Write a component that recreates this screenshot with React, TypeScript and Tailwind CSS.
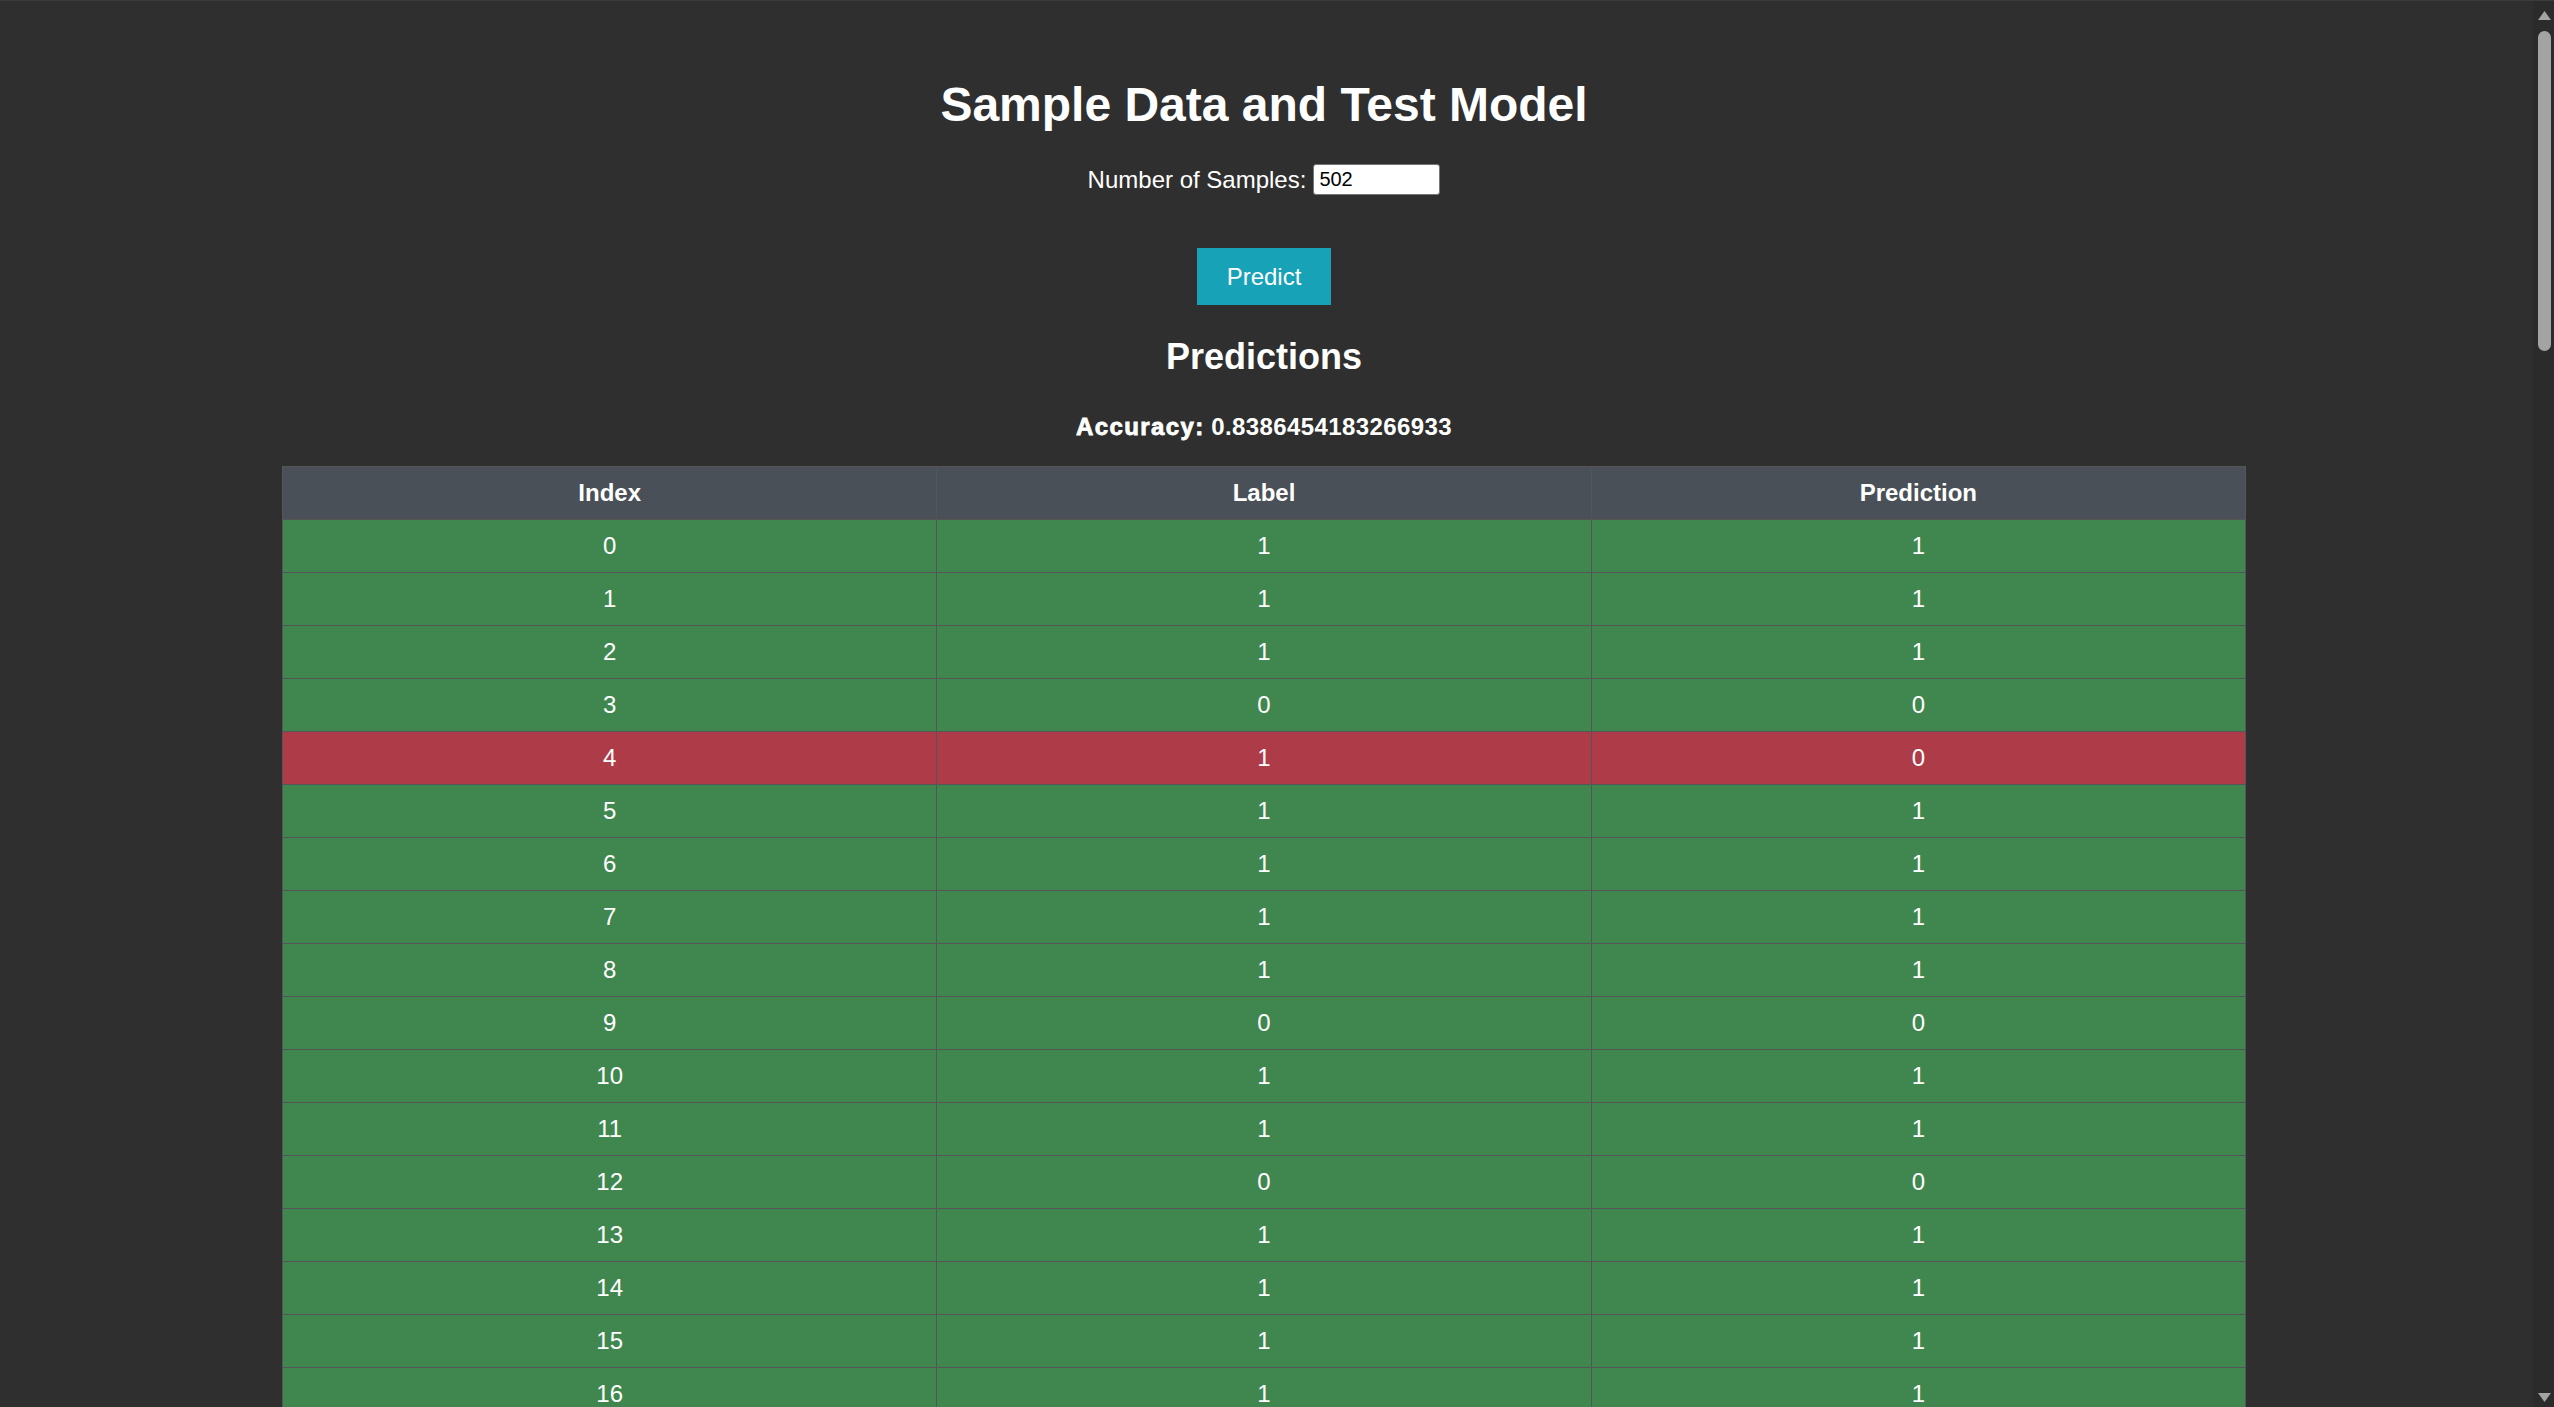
import React from 'react';

// [label, prediction] for the rows shown in the first screen of the table
const rows: [number, number][] = [
  [1, 1], [1, 1], [1, 1], [0, 0], [1, 0], [1, 1], [1, 1], [1, 1], [1, 1],
  [0, 0], [1, 1], [1, 1], [0, 0], [1, 1], [1, 1], [1, 1], [1, 1], [1, 1],
  [0, 0], [1, 1],
];

const Scrollbar: React.FC = () => (
  <div className="w-[21px] shrink-0 bg-[#2b2b2b] flex flex-col items-center">
    <svg width="15" height="11" viewBox="0 0 15 11" className="mt-[9px] ml-[2px]">
      <polygon points="7.5,1 14,10 1,10" fill="#a3a3a3" />
    </svg>
    <div className="mt-[10px] ml-[2px] w-[13px] h-[320px] rounded-full bg-[#a3a3a3]" />
    <div className="flex-1" />
    <svg width="15" height="11" viewBox="0 0 15 11" className="mb-[4px] ml-[2px]">
      <polygon points="1,1 14,1 7.5,10" fill="#a3a3a3" />
    </svg>
  </div>
);

const App: React.FC = () => {
  return (
    <div className="h-screen overflow-hidden flex bg-[#2f2f2f] border-t border-[#3a3a3f] font-['Liberation_Sans',Arial,sans-serif] text-white">
      <main className="flex-1 pr-[5px] flex flex-col items-center overflow-hidden">
        <h1 className="mt-[77px] text-[48px] leading-[54px] font-bold">Sample Data and Test Model</h1>

        {/* Sample count */}
        <div className="mt-[32px] h-[31px] flex items-center gap-[7px]">
          <label className="text-[24px] leading-[28px]">Number of Samples:</label>
          <input
            type="text"
            defaultValue="502"
            className="w-[127px] h-[31px] bg-white text-black text-[20px] pl-[5px] border border-[#767676] rounded-[3px] outline-none font-['Liberation_Sans',Arial,sans-serif]"
          />
        </div>

        <button className="mt-[53px] bg-[#17a2b8] text-white text-[24px] leading-[27px] px-[30px] py-[15px]">
          Predict
        </button>

        <h2 className="mt-[31px] text-[36px] leading-[41px] font-bold">Predictions</h2>

        <p className="mt-[36px] text-[24px] leading-[28px] font-bold">
          <span className="tracking-[1.4px] [-webkit-text-stroke:0.8px_white]">Accuracy:</span>{' '}
          <span className="tracking-[0.4px]">0.8386454183266933</span>
        </p>

        {/* Results table */}
        <table className="mt-[25px] w-[1964px] table-fixed border-collapse border border-[#555] text-[24px] leading-[28px]">
          <thead>
            <tr className="bg-[#495057]">
              <th className="border border-[#555] py-3 font-bold">Index</th>
              <th className="border border-[#555] py-3 font-bold">Label</th>
              <th className="border border-[#555] py-3 font-bold">Prediction</th>
            </tr>
          </thead>
          <tbody>
            {rows.map(([label, pred], i) => (
              <tr key={i} className={label === pred ? 'bg-[#40874f]' : 'bg-[#ae3c48]'}>
                <td className="border border-[#555] py-3 text-center">{i}</td>
                <td className="border border-[#555] py-3 text-center">{label}</td>
                <td className="border border-[#555] py-3 text-center">{pred}</td>
              </tr>
            ))}
          </tbody>
        </table>
      </main>
      <Scrollbar />
    </div>
  );
};

export default App;
